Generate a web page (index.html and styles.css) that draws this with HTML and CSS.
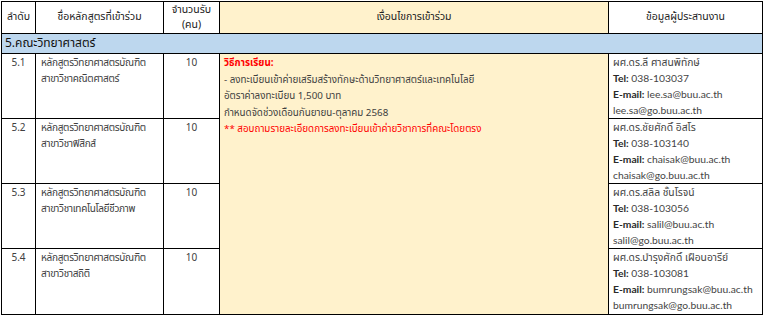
FILE: index.html
```html
<!DOCTYPE html>
<html lang="th">
<head>
<meta charset="utf-8">
<title>คณะวิทยาศาสตร์</title>
<link rel="stylesheet" href="styles.css">
</head>
<body>
<div class="wrap">
<table class="grid">
  <colgroup>
    <col class="c-no">
    <col class="c-name">
    <col class="c-qty">
    <col class="c-cond">
    <col class="c-contact">
  </colgroup>
  <thead>
    <tr class="head">
      <th>ลำดับ</th>
      <th>ชื่อหลักสูตรที่เข้าร่วม</th>
      <th>จำนวนรับ<br>(คน)</th>
      <th class="cond-head">เงื่อนไขการเข้าร่วม</th>
      <th>ข้อมูลผู้ประสานงาน</th>
    </tr>
  </thead>
  <tbody>
    <tr class="section">
      <td colspan="5">5.คณะวิทยาศาสตร์</td>
    </tr>
    <tr class="r1">
      <td class="no">5.1</td>
      <td class="name">หลักสูตรวิทยาศาสตรบัณฑิต<br>สาขาวิชาคณิตศาสตร์</td>
      <td class="qty">10</td>
      <td class="cond" rowspan="4">
        <div class="red b">วิธีการเรียน:</div>
        <div>- ลงทะเบียนเข้าค่ายเสริมสร้างทักษะด้านวิทยาศาสตร์และเทคโนโลยี</div>
        <div>อัตราค่าลงทะเบียน 1,500 บาท</div>
        <div>กำหนดจัดช่วงเดือนกันยายน-ตุลาคม 2568</div>
        <div class="red">** สอบถามรายละเอียดการลงทะเบียนเข้าค่ายวิชาการที่คณะโดยตรง</div>
      </td>
      <td class="contact">
        <div>ผศ.ดร.ลี ศาสนพิทักษ์</div>
        <div><b>Tel:</b> 038-103037</div>
        <div><b>E-mail:</b> lee.sa@buu.ac.th</div>
        <div>lee.sa@go.buu.ac.th</div>
      </td>
    </tr>
    <tr class="r2">
      <td class="no">5.2</td>
      <td class="name">หลักสูตรวิทยาศาสตรบัณฑิต<br>สาขาวิชาฟิสิกส์</td>
      <td class="qty">10</td>
      <td class="contact">
        <div>ผศ.ดร.ชัยศักดิ์ อิสโร</div>
        <div><b>Tel:</b> 038-103140</div>
        <div><b>E-mail:</b> chaisak@buu.ac.th</div>
        <div>chaisak@go.buu.ac.th</div>
      </td>
    </tr>
    <tr class="r3">
      <td class="no">5.3</td>
      <td class="name">หลักสูตรวิทยาศาสตรบัณฑิต<br>สาขาวิชาเทคโนโลยีชีวภาพ</td>
      <td class="qty">10</td>
      <td class="contact">
        <div>ผศ.ดร.สลิล ชั้นโรจน์</div>
        <div><b>Tel:</b> 038-103056</div>
        <div><b>E-mail:</b> salil@buu.ac.th</div>
        <div>salil@go.buu.ac.th</div>
      </td>
    </tr>
    <tr class="r4">
      <td class="no">5.4</td>
      <td class="name">หลักสูตรวิทยาศาสตรบัณฑิต<br>สาขาวิชาสถิติ</td>
      <td class="qty">10</td>
      <td class="contact">
        <div>ผศ.ดร.บำรุงศักดิ์ เฝือนอารีย์</div>
        <div><b>Tel:</b> 038-103081</div>
        <div><b>E-mail:</b> bumrungsak@buu.ac.th</div>
        <div>bumrungsak@go.buu.ac.th</div>
      </td>
    </tr>
  </tbody>
</table>
</div>
</body>
</html>
```
FILE: styles.css
```css
html, body {
  margin: 0;
  padding: 0;
  background: #ffffff;
}
.wrap {
  padding: 1px 0 0 1px;
}
.grid {
  border-collapse: collapse;
  table-layout: fixed;
  width: 761px;
  font-family: "Tahoma", "Noto Sans Thai", "Noto Sans", "DejaVu Sans", sans-serif;
  font-size: 10px;
  color: #404040;
}
.c-no { width: 34px; }
.c-name { width: 128px; }
.c-qty { width: 56px; }
.c-cond { width: 389px; }
.c-contact { width: 154px; }

.grid th,
.grid td {
  border: 1px solid #000;
  padding: 0;
  vertical-align: top;
  line-height: 16px;
  overflow: hidden;
}
.grid .head th {
  height: 31px;
  font-weight: normal;
  font-size: 10.5px;
  line-height: 15px;
  color: #222;
  text-align: center;
  vertical-align: middle;
  background: #fff;
}
.grid .head th.cond-head {
  background: #fff2cc;
}
.grid .section td {
  background: #bdd7ee;
  height: 19px;
  font-size: 12px;
  line-height: 19px;
  color: #111;
  padding-left: 3px;
  vertical-align: middle;
}
.grid .r1 { height: 65px; }
.grid .r2 { height: 65px; }
.grid .r3 { height: 64px; }
.grid .r4 { height: 66px; }

.grid td.no { text-align: center; padding-top: 1px; }
.grid td.name {
  padding: 1px 0 0 5px;
  font-size: 10px;
  letter-spacing: -0.3px;
}
.grid td.qty { text-align: center; padding-top: 1px; }
.grid td.cond {
  background: #fff2cc;
  padding: 1px 0 0 4px;
  line-height: 16.5px;
  font-size: 9.8px;
}
.red { color: #ff0000; }
.b { font-weight: bold; }
.grid td.contact {
  padding: 0 0 0 4px;
  font-family: "Lato", "Noto Sans Thai", "Noto Sans", sans-serif;
  font-size: 10.3px;
  line-height: 16px;
  color: #444;
}
.contact b { font-weight: bold; color: #2a2a2a; }
```
